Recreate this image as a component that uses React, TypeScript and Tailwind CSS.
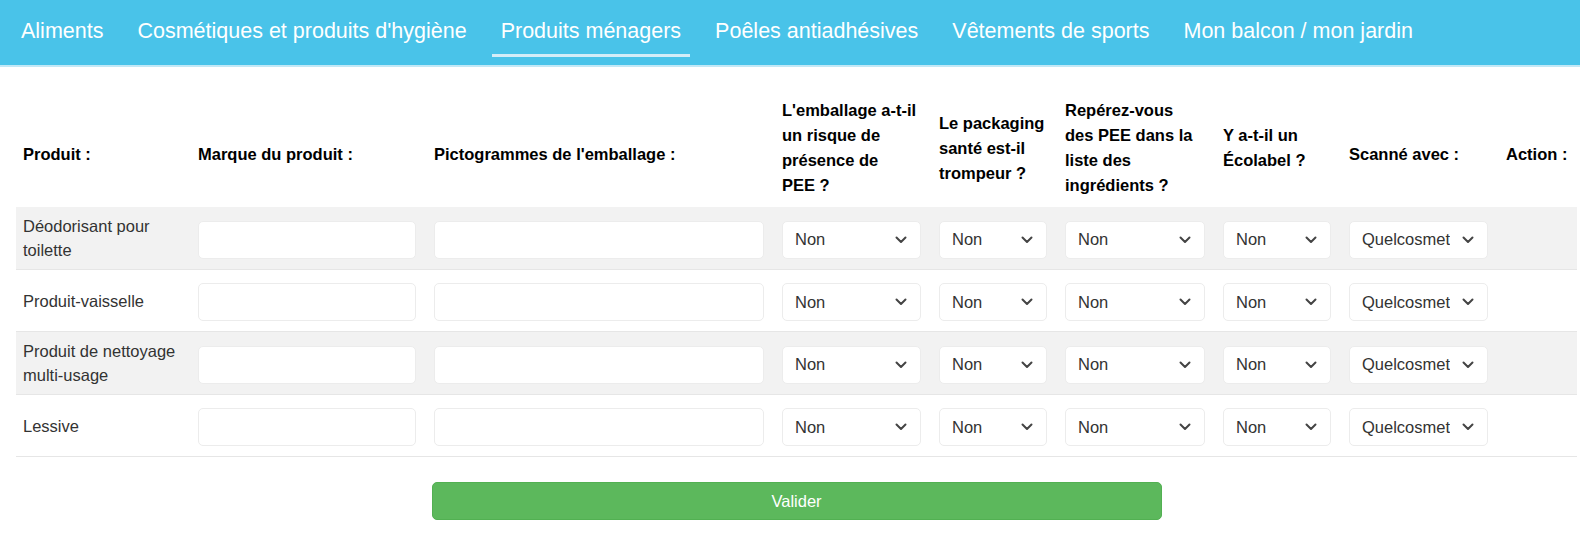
import React from "react";

const tabs = [
  "Aliments",
  "Cosmétiques et produits d'hygiène",
  "Produits ménagers",
  "Poêles antiadhésives",
  "Vêtements de sports",
  "Mon balcon / mon jardin",
];

const headers: string[][] = [
  ["Produit :"],
  ["Marque du produit :"],
  ["Pictogrammes de l'emballage :"],
  ["L'emballage a-t-il", "un risque de", "présence de", "PEE ?"],
  ["Le packaging", "santé est-il", "trompeur ?"],
  ["Repérez-vous", "des PEE dans la", "liste des", "ingrédients ?"],
  ["Y a-t-il un", "Écolabel ?"],
  ["Scanné avec :"],
  ["Action :"],
];

const products: string[][] = [
  ["Déodorisant pour", "toilette"],
  ["Produit-vaisselle"],
  ["Produit de nettoyage", "multi-usage"],
  ["Lessive"],
];

const Chevron = () => (
  <svg width="12" height="8" viewBox="0 0 12 8" className="shrink-0 ml-[12px]">
    <polyline
      points="1.5,1.5 6,6 10.5,1.5"
      fill="none"
      stroke="#444"
      strokeWidth="2"
      strokeLinecap="round"
      strokeLinejoin="round"
    />
  </svg>
);

// faux select: texte coupé + chevron
const Select = ({ value }: { value: string }) => (
  <div className="h-[38px] w-full rounded-[5px] bg-white border border-[#ececec] flex items-center pl-[12px] pr-[13px]">
    <span className="flex-1 min-w-0 overflow-hidden whitespace-nowrap text-[16.5px] text-[#333]">
      {value}
    </span>
    <Chevron />
  </div>
);

const Input = () => (
  <input
    type="text"
    className="block h-[38px] w-full rounded-[5px] bg-white border border-[#ececec] px-[12px] text-[16.5px] text-[#333] outline-none"
  />
);

export default function App() {
  return (
    <div className="min-h-screen bg-white font-['Liberation_Sans',Arial,sans-serif]">
      {/* Onglets */}
      <nav className="h-[67px] bg-[#49c3e9] border-b-2 border-[#c2e8f6] flex items-stretch px-[12px] gap-[16px]">
        {tabs.map((t) => {
          const active = t === "Produits ménagers";
          return (
            <a
              key={t}
              href="#"
              className="relative flex items-center px-[9px] pb-[2px] text-[21.5px] text-white whitespace-nowrap"
            >
              {t}
              {active && (
                <span className="absolute left-0 right-0 bottom-[8px] h-[3px] bg-[#d3edf8]" />
              )}
            </a>
          );
        })}
      </nav>

      <div className="pt-[20px] pl-[16px] pr-[3px]">
        <table className="w-full table-fixed border-collapse">
          <colgroup>
            <col className="w-[173px]" />
            <col className="w-[236px]" />
            <col className="w-[348px]" />
            <col className="w-[157px]" />
            <col className="w-[126px]" />
            <col className="w-[158px]" />
            <col className="w-[126px]" />
            <col className="w-[157px]" />
            <col className="w-[80px]" />
          </colgroup>
          <thead>
            <tr>
              {headers.map((lines, i) => (
                <th
                  key={i}
                  className={`text-left align-middle font-bold text-[16.5px] leading-[25px] text-black whitespace-nowrap pb-[9px] pr-[9px] ${
                    i === 0 ? "pl-[7px]" : "pl-[9px]"
                  } ${lines.length === 1 ? "pt-[23px]" : "pt-[11px]"}`}
                >
                  {lines.map((l, j) => (
                    <div key={j}>{l}</div>
                  ))}
                </th>
              ))}
            </tr>
          </thead>
          <tbody>
            {products.map((name, r) => (
              <tr
                key={r}
                className={`border-b border-[#e6e6e6] ${r % 2 === 0 ? "bg-[#f2f2f2]" : "bg-white"}`}
              >
                <td className="align-middle pl-[7px] pr-[9px] py-[7px] text-[16.5px] leading-[24px] text-[#333] whitespace-nowrap">
                  {name.map((l, j) => (
                    <div key={j}>{l}</div>
                  ))}
                </td>
                <td className="align-middle px-[9px] pt-[13px] pb-[10px]">
                  <Input />
                </td>
                <td className="align-middle px-[9px] pt-[13px] pb-[10px]">
                  <Input />
                </td>
                {["Non", "Non", "Non", "Non", "Quelcosmetic"].map((v, k) => (
                  <td key={k} className="align-middle px-[9px] pt-[13px] pb-[10px]">
                    <Select value={v} />
                  </td>
                ))}
                <td className="px-[9px]" />
              </tr>
            ))}
          </tbody>
        </table>

        <div className="flex justify-center pt-[25px]">
          <button className="w-[730px] h-[38px] rounded-[5px] bg-[#5cb85c] border border-[#52b052] text-white text-[16.5px]">
            Valider
          </button>
        </div>
      </div>
    </div>
  );
}
